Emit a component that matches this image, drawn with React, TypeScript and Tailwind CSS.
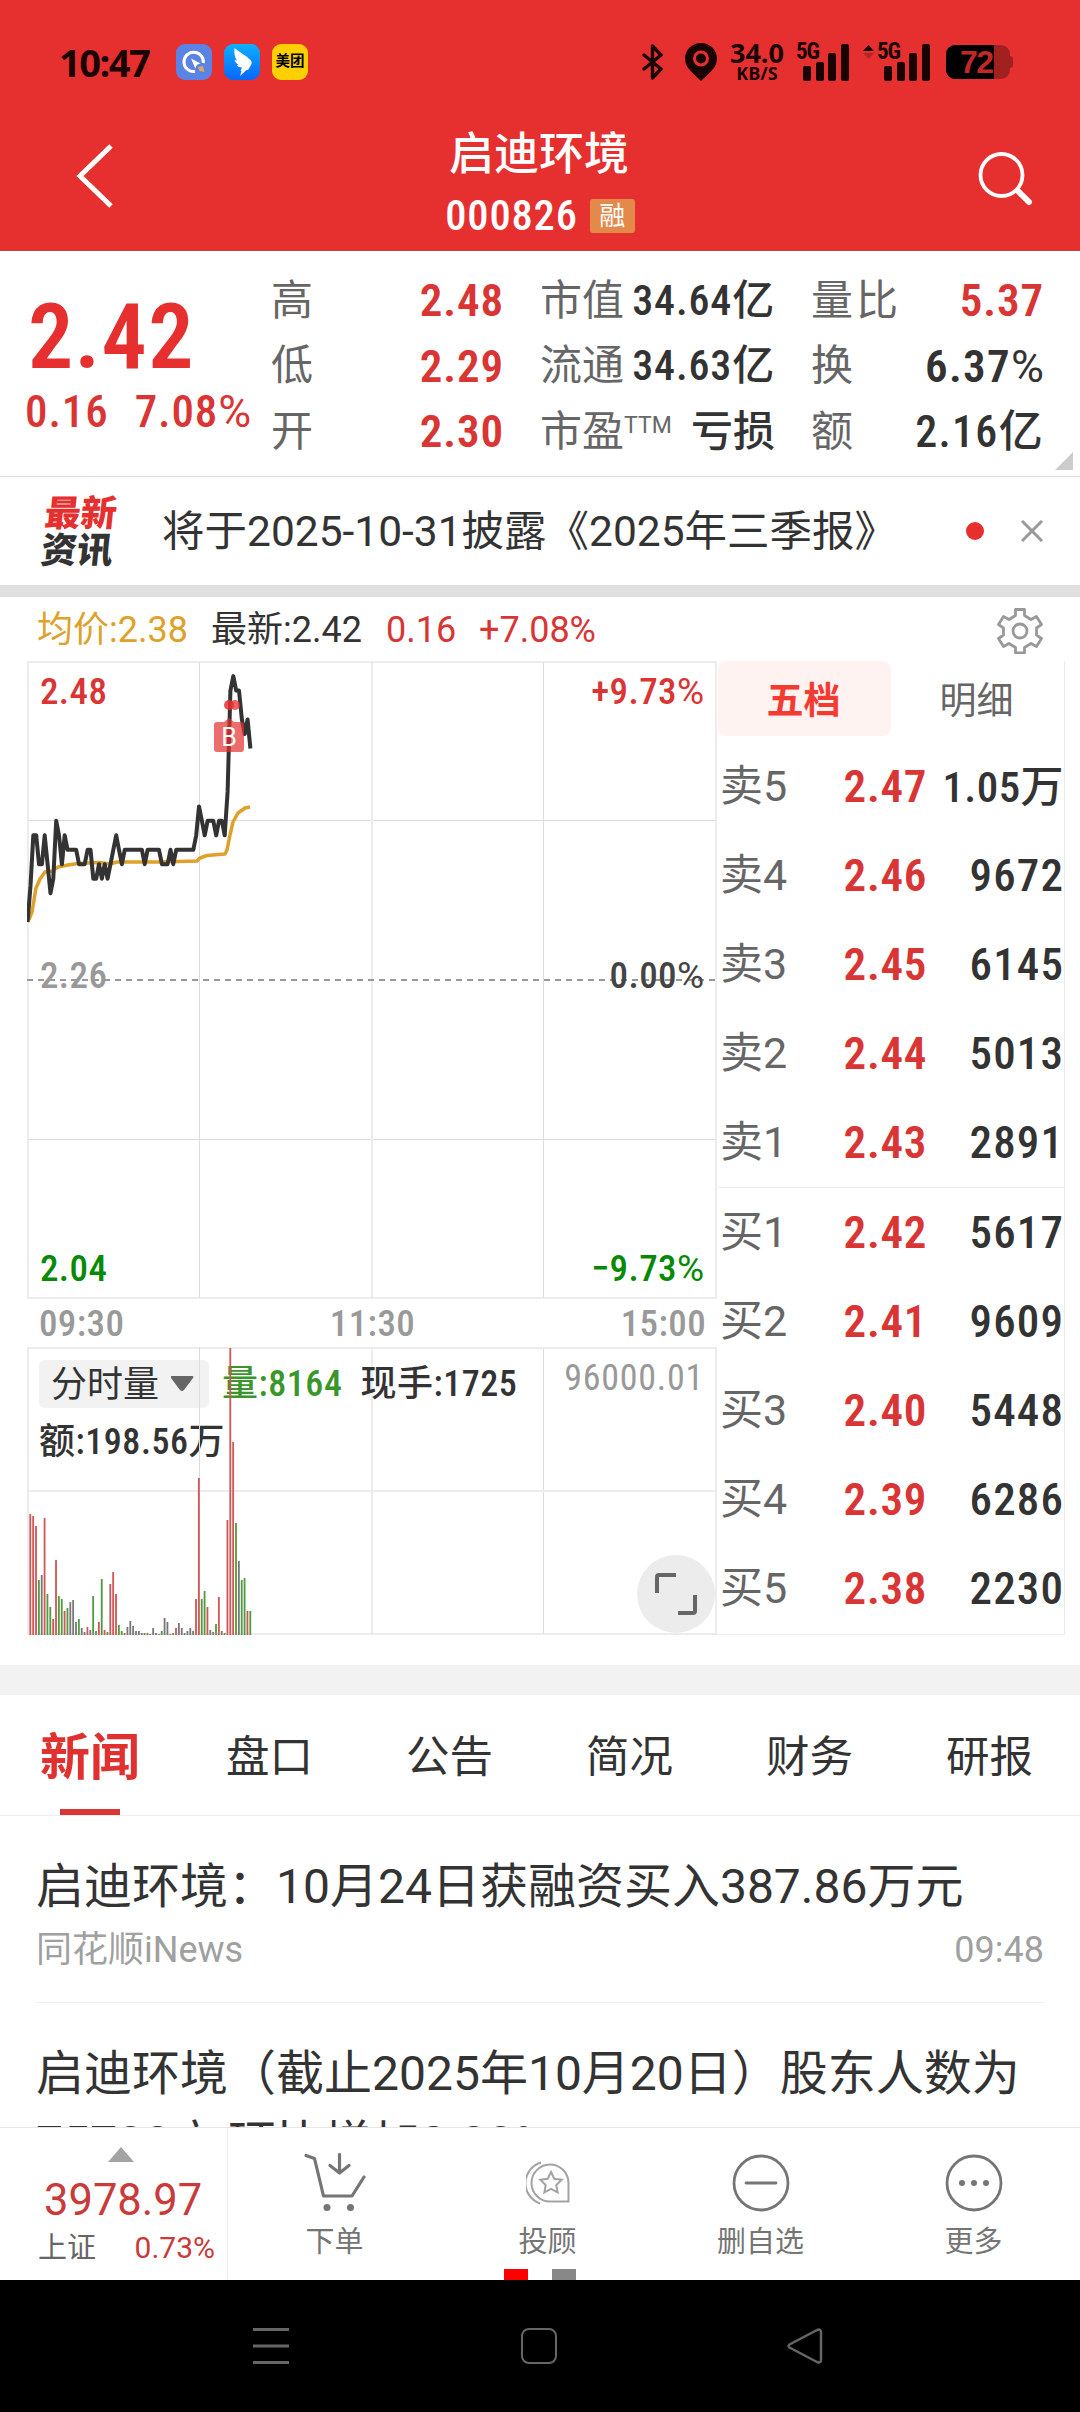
import type { ReactNode } from "react";

type Tone = "r" | "g" | "k";

type BookRow = {
  label: string;
  price: string;
  volume: string;
};

const SELLS: BookRow[] = [
  { label: "卖5", price: "2.47", volume: "1.05万" },
  { label: "卖4", price: "2.46", volume: "9672" },
  { label: "卖3", price: "2.45", volume: "6145" },
  { label: "卖2", price: "2.44", volume: "5013" },
  { label: "卖1", price: "2.43", volume: "2891" },
];

const BUYS: BookRow[] = [
  { label: "买1", price: "2.42", volume: "5617" },
  { label: "买2", price: "2.41", volume: "9609" },
  { label: "买3", price: "2.40", volume: "5448" },
  { label: "买4", price: "2.39", volume: "6286" },
  { label: "买5", price: "2.38", volume: "2230" },
];

const TABS = ["新闻", "盘口", "公告", "简况", "财务", "研报"];

// minute prices in cents, starting at 09:30
const PRICES = [
  230, 232.5, 236, 236, 234, 234, 236, 234, 232, 233, 237, 236, 234, 236, 235, 235, 235, 235, 234, 234,
  234, 235, 235, 233, 233, 234, 233, 234, 233, 234, 235, 236, 235, 234, 235, 235, 235, 235, 235, 235,
  235, 234, 235, 235, 235, 235, 235, 234, 234, 234, 235, 234, 235, 235, 235, 235, 235, 235, 235, 236,
  238, 237, 236, 237, 237, 237, 236, 237, 237, 236, 239, 246, 247, 246, 246, 244, 243, 244, 242,
];

// [bar height, colour] per minute
const VOLUMES: [number, Tone][] = [
  [121, "r"], [119, "r"], [109, "r"], [55, "g"], [60, "k"], [117, "r"], [41, "g"], [28, "g"], [16, "r"], [75, "r"],
  [39, "g"], [36, "g"], [24, "r"], [27, "g"], [33, "k"], [35, "k"], [13, "k"], [16, "g"], [7, "k"], [3, "k"],
  [8, "r"], [5, "k"], [39, "g"], [4, "k"], [13, "r"], [56, "g"], [5, "r"], [3, "g"], [51, "r"], [63, "r"],
  [41, "r"], [10, "g"], [4, "g"], [2, "r"], [8, "k"], [14, "k"], [9, "k"], [4, "k"], [4, "k"], [2, "k"],
  [2, "g"], [2, "r"], [1, "k"], [7, "k"], [2, "k"], [1, "k"], [4, "g"], [17, "k"], [13, "k"], [1, "r"],
  [2, "g"], [7, "r"], [12, "k"], [7, "k"], [2, "k"], [4, "k"], [7, "k"], [4, "k"], [36, "r"], [157, "r"],
  [36, "g"], [44, "g"], [28, "r"], [5, "k"], [3, "k"], [11, "g"], [38, "r"], [4, "k"], [2, "g"], [115, "r"],
  [287, "r"], [193, "r"], [112, "g"], [74, "k"], [55, "g"], [57, "g"], [24, "r"], [24, "g"],
];

const BAR_COLORS: Record<Tone, string> = { r: "#d05555", g: "#4f9a3f", k: "#777777" };

const STEP = 2.857;

const pricePoints = PRICES.map((p, i) => `${(0.6 + i * STEP).toFixed(1)},${(319 - (p - 226) * 14.47).toFixed(1)}`).join(" ");

function StatusBar() {
  return (
    <div className="flex h-[124px] items-center pl-[59px] pr-[67px] text-[#1a0303]">
      <span className="w-[117px] font-['Open_Sans'] text-[38px] font-bold leading-none tracking-[-1.5px]">10:47</span>
      <div className="flex items-center gap-3">
        <svg width="36" height="36" viewBox="0 0 36 36">
          <rect width="36" height="36" rx="9" fill="#5b83e4" />
          <path d="M19 27.5A9.7 9.7 0 1 1 27.3 19" fill="none" stroke="#fff" strokeWidth="3" />
          <path d="M15 14.5l9.5 5-3.6 1.2-1.6 3.7z" fill="#fff" />
          <path d="M22 23l5-1 1.5 6-5-1z" fill="#d9a860" />
        </svg>
        <svg width="36" height="36" viewBox="0 0 36 36">
          <defs>
            <linearGradient id="wing" x1="0" y1="0" x2="0" y2="1">
              <stop offset="0" stopColor="#0db0ff" />
              <stop offset="1" stopColor="#0866ff" />
            </linearGradient>
          </defs>
          <rect width="36" height="36" rx="9" fill="url(#wing)" />
          <path d="M10.500 4c4.500 4 11 7 16 12 1.500 1.700 1.500 3 .5 5L24 26h-1.500L16 32l1.500-5h-1l1.500-3.500c-3 0-4.500-1-5.500-2.500l2.500.2c-2.500-1.500-4-3.500-4.500-5.500l2.500 1c-2.500-3-3-8-2.500-12.700z" fill="#fff" />
        </svg>
        <span className="flex size-9 items-center justify-center rounded-[9px] bg-[#ffd000] text-[14.5px] font-bold leading-none text-black">美团</span>
      </div>
      <div className="ml-auto flex items-center">
        <svg width="22" height="38" viewBox="0 0 22 38" fill="none" stroke="currentColor" strokeWidth="3.4" strokeLinejoin="round" strokeLinecap="round">
          <path d="M2 12l17 14-8.500 9V3L19 12 2 26" />
        </svg>
        <svg className="ml-[21px]" width="32" height="38" viewBox="0 0 32 38">
          <path d="M16 0C7 0 0 7 0 15.500 0 25 8 30 16 38c8-8 16-13 16-22.500C32 7 25 0 16 0z" fill="currentColor" />
          <circle cx="16" cy="15.500" r="6.500" fill="none" stroke="#e62f2f" strokeWidth="3" />
        </svg>
        <div className="ml-[11px] flex w-[58px] flex-col items-center font-['Open_Sans'] leading-none">
          <span className="h-[22px] text-[27px] font-bold leading-[20px]">34.0</span>
          <span className="h-[16px] text-[18px] font-bold leading-[17px]">KB/S</span>
        </div>
        <Signal className="ml-[11px]" />
        <svg className="mb-5 ml-[14px]" width="11" height="15" viewBox="0 0 11 15">
          <path d="M5.500 0L11 6H0z" fill="currentColor" />
          <path d="M5.500 14L11 8H0z" fill="#b32424" />
        </svg>
        <Signal className="ml-1" />
        <div className="relative ml-4 flex h-[34px] w-[64px] overflow-hidden rounded-[9px] bg-[#a12121]">
          <div className="h-full w-[48px] bg-black" />
          <span className="absolute left-[14px] top-0 font-['Liberation_Sans'] text-[32px] font-bold leading-[35px] tracking-[-1.5px] text-[#c32828]">72</span>
        </div>
        <div className="h-3 w-[3px] rounded-r-sm bg-[#a12121]" />
      </div>
    </div>
  );
}

function Signal({ className }: { className: string }) {
  return (
    <div className={`relative h-[38px] w-[52px] ${className}`}>
      <span className="absolute -left-px -top-[2px] text-[23px] font-bold leading-[22px] tracking-[-1px] [font-stretch:85%]">5G</span>
      <svg width="52" height="38" viewBox="0 0 52 38" fill="currentColor">
        <rect x="6" y="23" width="8" height="15" rx="2" />
        <rect x="19" y="19" width="8" height="19" rx="2" />
        <rect x="31" y="10" width="8" height="28" rx="2" />
        <rect x="44" y="1" width="8" height="37" rx="2" />
      </svg>
    </div>
  );
}

function Percent({ children }: { children: string }) {
  return (
    <>
      {children}
      <span className="font-normal tracking-normal [font-stretch:95%]">%</span>
    </>
  );
}

function Stat({ label, value, tone }: { label: ReactNode; value: ReactNode; tone: string }) {
  return (
    <div className="flex h-[65.500px] items-center justify-between whitespace-nowrap leading-none">
      <span className="text-[42px] text-[#666]">{label}</span>
      <span className={`font-medium [font-stretch:80%] ${tone}`}>{value}</span>
    </div>
  );
}

function Quote() {
  const red = "text-[45px] font-semibold tracking-[0.02em] text-[#d93535]";
  const dark = "text-[42px] tracking-[0.02em] text-[#333]";
  return (
    <section className="relative flex h-[226px] border-b border-[#e0e0e0] pt-[17px]">
      <div className="w-[271px] shrink-0 whitespace-nowrap text-[#e62f2f] [font-stretch:80%]">
        <div className="mt-[35px] pl-7 text-[90px] font-semibold leading-[70px] tracking-[0.015em]">2.42</div>
        <div className="mt-[17px] flex gap-[26px] pl-[25px] text-[45px] font-medium leading-[44px] tracking-[0.02em] text-[#d93535]">
          <span>0.16</span>
          <span>
            <Percent>7.08</Percent>
          </span>
        </div>
      </div>
      <div className="w-[233px]">
        <Stat label="高" value="2.48" tone={red} />
        <Stat label="低" value="2.29" tone={red} />
        <Stat label="开" value="2.30" tone={red} />
      </div>
      <div className="ml-9 w-[235px]">
        <Stat label="市值" value="34.64亿" tone={dark} />
        <Stat label="流通" value="34.63亿" tone={dark} />
        <Stat
          label={
            <>
              市盈<span className="relative -top-[13px] text-[23px]">TTM</span>
            </>
          }
          value="亏损"
          tone="text-[42px] text-[#333]"
        />
      </div>
      <div className="ml-9 w-[233px]">
        <Stat label={<span className="tracking-[3px]">量比</span>} value="5.37" tone={red} />
        <Stat label="换" value={<Percent>6.37</Percent>} tone="text-[45px] font-semibold tracking-[0.03em] text-[#333]" />
        <Stat label="额" value="2.16亿" tone="text-[44px] tracking-[0.03em] text-[#333]" />
      </div>
      <svg className="absolute bottom-[6px] right-[7px]" width="18" height="18" viewBox="0 0 18 18">
        <path d="M18 0v18H0z" fill="#ccc" />
      </svg>
    </section>
  );
}

function Notice() {
  return (
    <section className="flex h-[108px] items-center pl-9 pr-[37px]">
      <div className="flex w-[126px] -skew-x-6 flex-col pl-[7px] pt-1 text-[36px] font-black leading-[37px]">
        <span className="text-[#e62f2f]">最新</span>
        <span className="text-[#333]">资讯</span>
      </div>
      <span className="whitespace-nowrap pt-[3px] text-[42.500px] leading-none text-[#333]">将于2025-10-31披露《2025年三季报》</span>
      <span className="ml-auto size-[18px] rounded-full bg-[#e62f2f]" />
      <svg className="ml-[37px]" width="22" height="22" viewBox="0 0 22 22" stroke="#999" strokeWidth="3">
        <path d="M1 1l20 20M21 1L1 21" />
      </svg>
    </section>
  );
}

function PriceChart() {
  return (
    <div className="relative h-[638px] w-[690px]">
      <svg className="absolute inset-0" width="690" height="638" viewBox="0 0 690 638" fill="none">
        <path d="M172.500 0v638M516.500 0v638M0 159.500h690M0 478.500h690" stroke="#dcdcdc" />
        <path d="M345 0v638M1 0v638M689 0v638M0 1h690M0 637h690" stroke="#ececec" strokeWidth="2" />
        <path d="M0 319h690" stroke="#999" strokeWidth="2" strokeDasharray="6 5" />
        <polyline
          points="2,259 5,251 9,227 13,218 18,211 26,210 31,206 41,204 51,202.500 73,201.500 83,203 90,201 133,201 170,200 173,197 180,194.500 198,193 200,189 203,174 206,161 211,152 218,147 223,146"
          stroke="#dea12a"
          strokeWidth="3.500"
          strokeLinejoin="round"
        />
        <polyline points={pricePoints} stroke="#333" strokeWidth="4" strokeLinejoin="round" />
        <g fill="#e62f2f">
          <circle cx="202" cy="44" r="5" fillOpacity=".85" />
          <circle cx="208" cy="44" r="5" fillOpacity=".75" />
          <path d="M190 61h7l5-4 5 4h7q3 0 3 3v24q0 3-3 3h-24q-3 0-3-3V64q0-3 3-3z" fillOpacity=".7" />
        </g>
        <text x="202" y="85" textAnchor="middle" fontSize="25" fill="#fff" fontFamily="Roboto, sans-serif">
          B
        </text>
      </svg>
      <div className="relative flex h-full flex-col text-[37px] font-medium leading-[36px] tracking-[0.01em] [font-stretch:80%]">
        <div className="mt-[13px] flex justify-between pl-[13px] pr-[13px] text-[#d93535]">
          <span>2.48</span>
          <span>
            <Percent>+9.73</Percent>
          </span>
        </div>
        <div className="mt-[248px] flex justify-between pl-[13px] pr-[13px] text-[#999]">
          <span>2.26</span>
          <span className="text-[#444]">
            <Percent>0.00</Percent>
          </span>
        </div>
        <div className="mt-[257px] flex justify-between pl-[13px] pr-[13px] text-[#068a06]">
          <span>2.04</span>
          <span>
            <Percent>−9.73</Percent>
          </span>
        </div>
      </div>
    </div>
  );
}

function VolumeChart() {
  return (
    <div className="relative h-[288px] w-[690px]">
      <svg className="absolute inset-0" width="690" height="288" viewBox="0 0 690 288" fill="none">
        <path d="M516.500 0v288" stroke="#dcdcdc" />
        <path d="M345 0v288M1 0v288M689 0v288M0 1h690M0 144h690M0 287h690" stroke="#ececec" strokeWidth="2" />
      </svg>
      <div className="relative text-[36px] leading-[48px] text-[#333]">
        <div className="flex h-[61px] items-end pl-3">
          <div className="flex h-12 w-[170px] items-center gap-[11px] rounded-md bg-[#f2f2f2] pl-3">
            <span className="pt-[2px]">分时量</span>
            <svg width="24" height="16" viewBox="0 0 24 16">
              <path d="M1 0h22q1 1 0 2L14 14q-2 2-4 0L1 2z" fill="#666" />
            </svg>
          </div>
          <span className="ml-[13px] font-medium tracking-[0.015em] text-[#3a962a] [font-stretch:80%]">量:8164</span>
          <span className="ml-[18px] font-medium tracking-[0.015em] [font-stretch:80%]">现手:1725</span>
          <span className="mb-[6px] ml-auto pr-[13px] tracking-[0.02em] text-[#999] [font-stretch:85%]">96000.01</span>
        </div>
        <div className="mt-[10px] pl-3 font-medium tracking-[0.015em] [font-stretch:80%]">额:198.56万</div>
      </div>
      <svg className="absolute inset-0" width="690" height="288" viewBox="0 0 690 288">
        <path d="M172.500 0v288" stroke="#dcdcdc" />
        {VOLUMES.map(([h, tone], i) => (
          <rect key={i} x={2.4 + i * STEP} y={288 - h} width="1.8" height={h} fill={BAR_COLORS[tone]} />
        ))}
      </svg>
      <div className="absolute bottom-[2px] right-[2px] flex size-[78px] items-center justify-center rounded-full bg-[#ececec]">
        <svg width="42" height="42" viewBox="0 0 42 42" fill="none" stroke="#666" strokeWidth="4">
          <path d="M2 20V4q0-2 2-2h17M23 40h15q2 0 2-2V22" />
        </svg>
      </div>
    </div>
  );
}

function Book({ rows }: { rows: BookRow[] }) {
  return (
    <>
      {rows.map((row) => (
        <div key={row.label} className="flex h-[89px] items-center pl-[2px] leading-none">
          <span className="w-[74px] text-[43px] text-[#666]">{row.label}</span>
          <span className="w-[133px] text-right text-[45px] font-semibold tracking-[0.015em] text-[#d93535] [font-stretch:80%]">{row.price}</span>
          <span className="flex-1 whitespace-nowrap text-right text-[45px] font-medium tracking-[0.025em] text-[#333] [font-stretch:80%]">
            {row.volume.endsWith("万") ? (
              <span className="text-[43px] tracking-[0.01em]">{row.volume}</span>
            ) : (
              row.volume
            )}
          </span>
        </div>
      ))}
    </>
  );
}

function Market() {
  return (
    <section className="h-[1068px]">
      <div className="flex h-16 items-center pl-[37px] pr-[37px] text-[36px] leading-none text-[#333]">
        <span className="w-[174px] pt-[2px] text-[#dea12a]">均价:2.38</span>
        <span className="w-[175px] pt-[2px]">最新:2.42</span>
        <span className="w-[93px] pt-[2px] text-[#d93535]">0.16</span>
        <span className="pt-[2px] text-[#d93535]">+7.08%</span>
        <svg className="ml-auto mt-1" width="46" height="46" viewBox="0 0 46 46" fill="none" stroke="#999" strokeWidth="2.800" strokeLinejoin="round">
          <path d="M18.500 1.500h9v6l6.500 4 5.500-3 5 8-5 3.500v7l5 3.500-5 8-5.500-3-6.500 4v5.500h-9V39.500l-6.500-4-5.500 3-5-8 5-3.500v-7l-5-3.500 5-8 5.500 3 6.500-4z" />
          <circle cx="23" cy="23" r="7" />
        </svg>
      </div>
      <div className="flex pl-[27px]">
        <div>
          <PriceChart />
          <div className="flex h-12 items-center justify-between pl-[12px] pr-[11px] pt-px text-[37px] font-medium leading-none tracking-[0.01em] text-[#999] [font-stretch:80%]">
            <span>09:30</span>
            <span>11:30</span>
            <span>15:00</span>
          </div>
          <VolumeChart />
        </div>
        <div className="h-[974px] w-[348px] border-b border-r border-[#ececec] pl-[1px]">
          <div className="flex h-[75px] text-[37px] leading-none">
            <span className="flex w-[173px] items-center justify-center rounded-lg bg-[#fff3f2] pr-[2px] pt-[5px] font-bold text-[#f43b32]">五档</span>
            <span className="flex flex-1 items-center justify-center pr-[2px] pt-[5px] text-[#666]">明细</span>
          </div>
          <div className="border-b border-[#ececec] pt-[6px]">
            <Book rows={SELLS} />
          </div>
          <Book rows={BUYS} />
        </div>
      </div>
    </section>
  );
}

function News() {
  return (
    <section className="h-[432px] overflow-hidden">
      <nav className="grid h-[121px] grid-cols-6 border-b border-[#ececec] text-[43.500px] leading-none text-[#333]">
        {TABS.map((tab, i) => (
          <span
            key={tab}
            className={
              i === 0
                ? "relative flex items-center justify-center pt-[6px] text-[50px] font-bold text-[#e0302f]"
                : "flex items-center justify-center pr-px pt-[6px]"
            }
          >
            {tab}
            {i === 0 && <i className="absolute bottom-0 left-[60px] h-[6px] w-[60px] bg-[#d93535]" />}
          </span>
        ))}
      </nav>
      <article className="mx-9 h-[187px] border-b border-[#ececec] pt-[35px]">
        <h2 className="whitespace-nowrap text-[48px] leading-[72px] text-[#333]">启迪环境：10月24日获融资买入387.86万元</h2>
        <div className="mt-[5px] flex justify-between text-[36px] leading-[44px] text-[#a0a0a0]">
          <span>同花顺iNews</span>
          <span>09:48</span>
        </div>
      </article>
      <article className="mx-9 pt-[36px]">
        <h2 className="whitespace-nowrap text-[48px] leading-[70px] text-[#333]">
          启迪环境（截止2025年10月20日）股东人数为
          <br />
          75708户,环比增加2.80%
        </h2>
      </article>
    </section>
  );
}

function Action({ label, children }: { label: string; children: ReactNode }) {
  return (
    <button className="flex flex-1 flex-col items-center pt-[24px] text-[29px] leading-[32px] text-[#757575]">
      <span className="mb-[12px] flex h-[62px] items-center">{children}</span>
      {label}
    </button>
  );
}

function BottomBar() {
  return (
    <footer className="relative flex h-[153px] border-t border-[#e6e6e6] bg-white">
      <div className="flex w-[228px] flex-col border-r border-[#ececec] pt-[19px]">
        <svg className="ml-[108px]" width="26" height="15" viewBox="0 0 26 15">
          <path d="M13 0l13 15H0z" fill="#a3a3a3" />
        </svg>
        <span className="mt-[17px] pl-[44px] text-[43.500px] leading-[44px] text-[#c93b3a]">3978.97</span>
        <div className="mt-[9px] flex items-center justify-between pl-[38px] pr-[12px] text-[29px] leading-[32px] text-[#666]">
          <span>上证</span>
          <span className="text-[30px] text-[#c93b3a]">0.73%</span>
        </div>
      </div>
      <Action label="下单">
        <svg width="62" height="60" viewBox="0 0 62 60" fill="none" stroke="currentColor" strokeWidth="3.200" strokeLinecap="round" strokeLinejoin="round">
          <path d="M2 2.500l8.500 3L19.500 43H48l12-19M35.500 1.500V20M26 12.500l9.500 7.500 9.500-7.500" />
          <circle cx="23" cy="54.500" r="3.500" fill="currentColor" stroke="none" />
          <circle cx="46.500" cy="54.500" r="3.500" fill="currentColor" stroke="none" />
        </svg>
      </Action>
      <Action label="投顾">
        <svg width="44" height="44" viewBox="0 0 44 44" fill="none" stroke="#a3a3a3" strokeWidth="2">
          <path d="M42.500 40.500H25A18.500 18.500 0 1 1 42.500 22z" />
          <path d="M14 42.500A21.500 21.500 0 0 1 15 1.500" />
          <path d="M25 11l3.300 6.800 7.400 1-5.400 5.200 1.300 7.400-6.600-3.500-6.600 3.500 1.300-7.400-5.400-5.200 7.400-1z" />
        </svg>
      </Action>
      <Action label="删自选">
        <svg width="58" height="58" viewBox="0 0 58 58" fill="none" stroke="currentColor" strokeWidth="2.800" strokeLinecap="round">
          <circle cx="29" cy="29" r="27" />
          <path d="M14 29h30" />
        </svg>
      </Action>
      <Action label="更多">
        <svg width="58" height="58" viewBox="0 0 58 58" fill="currentColor">
          <circle cx="29" cy="29" r="27" fill="none" stroke="currentColor" strokeWidth="2.800" />
          <circle cx="17" cy="29" r="3" />
          <circle cx="29" cy="29" r="3" />
          <circle cx="41" cy="29" r="3" />
        </svg>
      </Action>
      <div className="absolute bottom-0 left-[504px] flex gap-6">
        <i className="h-[11px] w-6 bg-[#fe0000]" />
        <i className="h-[11px] w-6 bg-[#888]" />
      </div>
    </footer>
  );
}

export default function App() {
  return (
    <main className="h-[2412px] w-[1080px] overflow-hidden bg-white font-['Roboto','Noto_Sans_CJK_SC',sans-serif]">
      <header className="h-[251px] border-b border-[#b94040] bg-[#e62f2f] text-white">
        <StatusBar />
        <div className="flex h-[126px] justify-between">
          <svg className="ml-[74px] mt-5" width="40" height="64" viewBox="0 0 40 64" fill="none" stroke="#fff" strokeWidth="5">
            <path d="M37 2L6 32l31 30" />
          </svg>
          <div className="flex flex-col items-center pr-[13px] pt-2">
            <h1 className="text-[45px] font-medium leading-[46px]">启迪环境</h1>
            <div className="mt-[16px] flex items-center gap-3 pl-[2px] leading-none">
              <span className="text-[42.500px] font-medium leading-[44px] tracking-[0.02em] [font-stretch:80%]">000826</span>
              <span className="flex h-[34px] w-[45px] items-center justify-center rounded-[3px] bg-[#e38a4a] text-[26px]">融</span>
            </div>
          </div>
          <svg className="mr-[47px] mt-[26px]" width="56" height="56" viewBox="0 0 56 56" fill="none" stroke="#fff" strokeLinecap="round">
            <circle cx="24.500" cy="25" r="21" strokeWidth="3.800" />
            <path d="M41 41l11 11" strokeWidth="6" />
          </svg>
        </div>
      </header>
      <Quote />
      <Notice />
      <div className="h-3 bg-[#e0e0e0]" />
      <Market />
      <div className="h-[30px] bg-[#f2f2f2]" />
      <News />
      <BottomBar />
      <nav className="flex h-[132px] items-center bg-black pl-[253px]">
        <svg width="36" height="36" viewBox="0 0 36 36" stroke="#666" strokeWidth="3">
          <path d="M0 1.500h36M0 18h36M0 34.500h36" />
        </svg>
        <i className="ml-[232px] size-9 rounded-lg border-[2.500px] border-[#666]" />
        <svg className="ml-[230px]" width="36" height="36" viewBox="0 0 36 36" fill="none" stroke="#666" strokeWidth="2.500" strokeLinejoin="round">
          <path d="M2.500 16.500q-2 1.500 0 3L30 34q4 1.500 4-2V4q0-3.500-4-2z" />
        </svg>
      </nav>
    </main>
  );
}
